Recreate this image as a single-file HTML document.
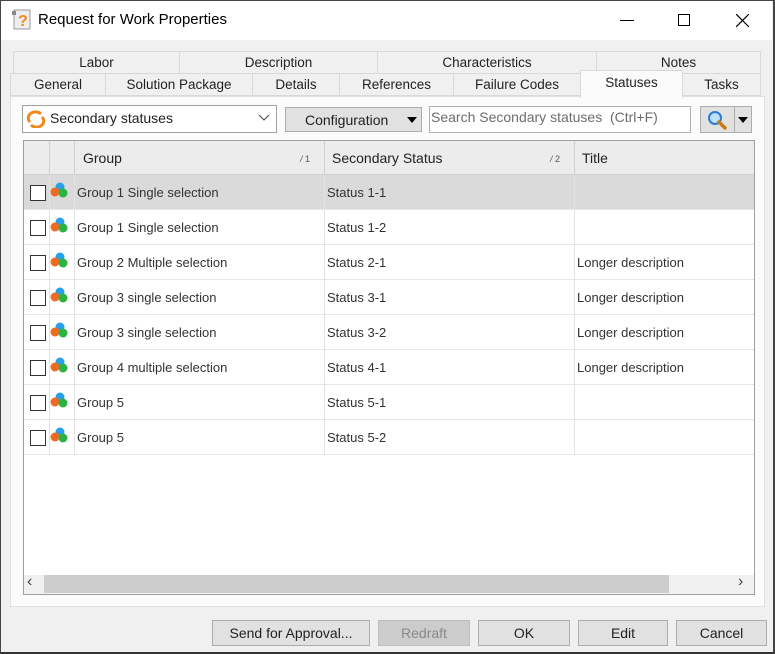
<!DOCTYPE html><html><head><style>
*{box-sizing:border-box;margin:0;padding:0}
body{width:775px;height:654px;overflow:hidden;font-family:"Liberation Sans",sans-serif;font-size:14px;color:#222;background:#f0f0f0;position:relative}
.a{position:absolute}
.win{left:0;top:0;width:775px;height:654px;border:1px solid #444;border-right:2px solid #444;border-bottom:2px solid #333}
.title{left:1px;top:1px;width:771px;height:39px;background:#fff}
.tab{position:absolute;height:23px;border:1px solid #d9d9d9;background:#f0f0f0;text-align:center;line-height:21px;font-size:13.5px;color:#222}
.btn{position:absolute;top:620px;height:26px;border:1px solid #adadad;background:#e1e1e1;text-align:center;line-height:24px;font-size:14px}
.row{position:absolute;left:24px;width:730px;height:35px;border-bottom:1px solid #e6e6e6;background:#fff}
.row span{position:absolute;top:10px;font-size:13px;color:#333}
.cb{position:absolute;left:6px;top:10px;width:16px;height:16px;border:1px solid #333;background:#fff}
.vl{position:absolute;top:0;width:1px;height:35px;background:#e3e3e3}
</style></head><body>
<div class="a win"></div>
<div class="a title"></div>
<svg class="a" style="left:12px;top:9px" width="20" height="22" viewBox="0 0 20 22"><rect x="2" y="1" width="16" height="19" fill="#eee" stroke="#999"/><rect x="0" y="2" width="4" height="4" fill="#888"/><text x="6" y="17" font-size="16" font-weight="bold" fill="#f08a1c" font-family="Liberation Sans">?</text></svg>
<div class="a" style="left:38px;top:11px;font-size:15px;color:#000">Request for Work Properties</div>
<div class="a" style="left:620px;top:20px;width:14px;height:1px;background:#000"></div>
<div class="a" style="left:678px;top:14px;width:12px;height:12px;border:1px solid #000"></div>
<svg class="a" style="left:736px;top:14px" width="13" height="13"><path d="M0 0L13 13M13 0L0 13" stroke="#000" stroke-width="1.2"/></svg>

<div class="tab" style="left:13px;top:51px;width:167px">Labor</div>
<div class="tab" style="left:179px;top:51px;width:199px">Description</div>
<div class="tab" style="left:377px;top:51px;width:220px">Characteristics</div>
<div class="tab" style="left:596px;top:51px;width:165px">Notes</div>
<div class="tab" style="left:10px;top:73px;width:96px">General</div>
<div class="tab" style="left:105px;top:73px;width:148px">Solution Package</div>
<div class="tab" style="left:252px;top:73px;width:88px">Details</div>
<div class="tab" style="left:339px;top:73px;width:115px">References</div>
<div class="tab" style="left:453px;top:73px;width:128px">Failure Codes</div>
<div class="tab" style="left:682px;top:73px;width:79px">Tasks</div>
<div class="a" style="left:10px;top:96px;width:755px;height:511px;background:#fbfbfb;border:1px solid #e0e0e0"></div>
<div class="tab" style="left:580px;top:70px;width:103px;height:28px;background:#fbfbfb;border-bottom:none;line-height:24px">Statuses</div>

<div class="a" style="left:22px;top:105px;width:255px;height:28px;background:#fff;border:1px solid #a0a0a0"></div>
<svg class="a" style="left:26px;top:110px" width="20" height="18"><path d="M4 12 A7 6 0 0 1 15 4" stroke="#f08a1c" stroke-width="3" fill="none"/><path d="M16 7 A7 6 0 0 1 5 15" stroke="#f08a1c" stroke-width="3" fill="none"/></svg>
<div class="a" style="left:50px;top:110px">Secondary statuses</div>
<svg class="a" style="left:258px;top:114px" width="12" height="8"><path d="M1 1L6 6L11 1" stroke="#444" fill="none"/></svg>
<div class="a" style="left:285px;top:107px;width:137px;height:25px;background:#e1e1e1;border:1px solid #adadad"></div>
<div class="a" style="left:305px;top:112px">Configuration</div>
<svg class="a" style="left:407px;top:117px" width="10" height="6"><path d="M0 0H10L5 6Z" fill="#000"/></svg>
<div class="a" style="left:429px;top:106px;width:262px;height:27px;background:#fff;border:1px solid #b0b0b0"></div>
<div class="a" style="left:431px;top:109px;color:#6d6d6d">Search Secondary statuses&nbsp; (Ctrl+F)</div>
<div class="a" style="left:700px;top:106px;width:52px;height:27px;background:#e1e1e1;border:1px solid #adadad"></div>
<div class="a" style="left:734px;top:107px;width:1px;height:25px;background:#adadad"></div>
<svg class="a" style="left:706px;top:109px" width="22" height="22"><circle cx="9" cy="9" r="6" fill="#bde0ff" stroke="#2e7bd0" stroke-width="2"/><path d="M13 13L19 19" stroke="#c87a18" stroke-width="3.5" stroke-linecap="round"/></svg>
<svg class="a" style="left:738px;top:117px" width="10" height="6"><path d="M0 0H10L5 6Z" fill="#000"/></svg>

<div class="a" style="left:23px;top:140px;width:732px;height:455px;background:#fff;border:1px solid #a0a0a0"></div>
<div class="a" style="left:24px;top:141px;width:730px;height:34px;background:#ececec;border-bottom:1px solid #d0d0d0"></div>
<div class="a" style="left:49px;top:141px;width:1px;height:34px;background:#d0d0d0"></div>
<div class="a" style="left:74px;top:141px;width:1px;height:34px;background:#d0d0d0"></div>
<div class="a" style="left:324px;top:141px;width:1px;height:34px;background:#d0d0d0"></div>
<div class="a" style="left:574px;top:141px;width:1px;height:34px;background:#d0d0d0"></div>
<div class="a" style="left:83px;top:150px">Group</div>
<div class="a" style="left:300px;top:154px;font-size:9px;color:#555"><i>/</i> 1</div>
<div class="a" style="left:332px;top:150px">Secondary Status</div>
<div class="a" style="left:550px;top:154px;font-size:9px;color:#555"><i>/</i> 2</div>
<div class="a" style="left:582px;top:150px">Title</div>

<div class="row" style="top:175px;background:#dadada"><div class="cb"></div><span style="left:53px">Group 1 Single selection</span><span style="left:303px">Status 1-1</span><div class="vl" style="left:25px"></div><div class="vl" style="left:50px"></div><div class="vl" style="left:300px"></div><div class="vl" style="left:550px"></div></div>
<div class="row" style="top:210px"><div class="cb"></div><span style="left:53px">Group 1 Single selection</span><span style="left:303px">Status 1-2</span><div class="vl" style="left:25px"></div><div class="vl" style="left:50px"></div><div class="vl" style="left:300px"></div><div class="vl" style="left:550px"></div></div>
<div class="row" style="top:245px"><div class="cb"></div><span style="left:53px">Group 2 Multiple selection</span><span style="left:303px">Status 2-1</span><span style="left:553px">Longer description</span><div class="vl" style="left:25px"></div><div class="vl" style="left:50px"></div><div class="vl" style="left:300px"></div><div class="vl" style="left:550px"></div></div>
<div class="row" style="top:280px"><div class="cb"></div><span style="left:53px">Group 3 single selection</span><span style="left:303px">Status 3-1</span><span style="left:553px">Longer description</span><div class="vl" style="left:25px"></div><div class="vl" style="left:50px"></div><div class="vl" style="left:300px"></div><div class="vl" style="left:550px"></div></div>
<div class="row" style="top:315px"><div class="cb"></div><span style="left:53px">Group 3 single selection</span><span style="left:303px">Status 3-2</span><span style="left:553px">Longer description</span><div class="vl" style="left:25px"></div><div class="vl" style="left:50px"></div><div class="vl" style="left:300px"></div><div class="vl" style="left:550px"></div></div>
<div class="row" style="top:350px"><div class="cb"></div><span style="left:53px">Group 4 multiple selection</span><span style="left:303px">Status 4-1</span><span style="left:553px">Longer description</span><div class="vl" style="left:25px"></div><div class="vl" style="left:50px"></div><div class="vl" style="left:300px"></div><div class="vl" style="left:550px"></div></div>
<div class="row" style="top:385px"><div class="cb"></div><span style="left:53px">Group 5</span><span style="left:303px">Status 5-1</span><div class="vl" style="left:25px"></div><div class="vl" style="left:50px"></div><div class="vl" style="left:300px"></div><div class="vl" style="left:550px"></div></div>
<div class="row" style="top:420px"><div class="cb"></div><span style="left:53px">Group 5</span><span style="left:303px">Status 5-2</span><div class="vl" style="left:25px"></div><div class="vl" style="left:50px"></div><div class="vl" style="left:300px"></div><div class="vl" style="left:550px"></div></div>
<svg class="a" style="left:0;top:0;pointer-events:none" width="775" height="654">
<defs><g id="ic"><circle cx="10" cy="5" r="4.5" fill="#2aa0e8"/><circle cx="5" cy="10" r="4.5" fill="#f06a22"/><circle cx="13" cy="11" r="4.5" fill="#2cb440"/></g></defs>
<use href="#ic" x="50" y="182"/><use href="#ic" x="50" y="217"/><use href="#ic" x="50" y="252"/><use href="#ic" x="50" y="287"/><use href="#ic" x="50" y="322"/><use href="#ic" x="50" y="357"/><use href="#ic" x="50" y="392"/><use href="#ic" x="50" y="427"/>
</svg>

<div class="a" style="left:24px;top:575px;width:730px;height:19px;background:#f0f0f0"></div>
<div class="a" style="left:44px;top:575px;width:625px;height:18px;background:#cdcdcd"></div>
<div class="a" style="left:27px;top:573px;font-size:16px;color:#444">‹</div>
<div class="a" style="left:738px;top:573px;font-size:16px;color:#444">›</div>

<div class="btn" style="left:212px;width:158px">Send for Approval...</div>
<div class="btn" style="left:378px;width:92px;background:#cccccc;border-color:#bfbfbf;color:#8a8a8a">Redraft</div>
<div class="btn" style="left:478px;width:92px">OK</div>
<div class="btn" style="left:578px;width:90px">Edit</div>
<div class="btn" style="left:676px;width:91px">Cancel</div>
</body></html>
